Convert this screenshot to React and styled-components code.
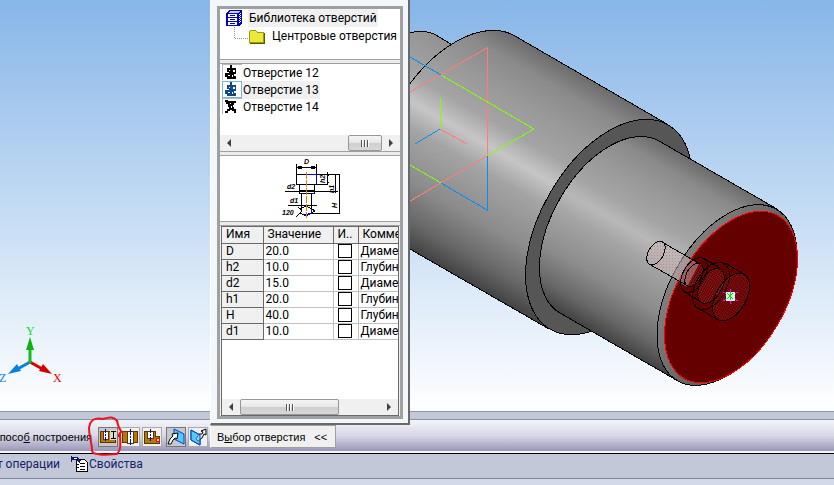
import React from 'react';
import styled, { createGlobalStyle } from 'styled-components';

const uiFont = 'Roboto, "Noto Sans", sans-serif';
const dialogFont = '"Liberation Sans", Arial, sans-serif';

const GlobalStyle = createGlobalStyle`
  * {
    box-sizing: border-box;
  }
  body {
    margin: 0;
    overflow: hidden;
    font-family: ${uiFont};
    font-size: 12px;
    color: #000;
  }
  button {
    font: inherit;
    color: inherit;
    padding: 0;
  }
`;

const Workspace = styled.div`
  display: flex;
  flex-direction: column;
  height: 100vh;
  background: #d3d9e8;
`;

const Viewport = styled.main`
  flex: 1;
  min-height: 0;
  overflow: hidden;
  background: linear-gradient(#87b6e8, #ffffff);

  svg {
    display: block;
    width: 100%;
    height: 100%;
  }
`;

const PanelGrip = styled.div`
  height: 9px;
  border-top: 1px solid #8a93a8;
  border-bottom: 1px solid #8a93a8;
  background: #c3c8d8;
`;

const PropertyBar = styled.div`
  display: flex;
  align-items: center;
  height: 33px;
  padding-top: 2px;
  border-bottom: 2px solid #f4f4fa;
  background: linear-gradient(#f4f4fa, #d8d8e6 50%, #9a97b8);
  font-family: ${dialogFont};
  font-size: 11px;
`;

const BarLabel = styled.span`
  display: flex;
  justify-content: flex-end;
  width: ${(props) => props.$width};
  overflow: hidden;
  white-space: nowrap;
`;

const ModeGroup = styled.div`
  display: flex;
  gap: 2px;
  margin-left: ${(props) => props.$left};
`;

const ModeSlot = styled.div`
  position: relative;
`;

const ModeButton = styled.button`
  display: block;
  width: 20px;
  height: 20px;
  border: 1px solid ${(props) => (props.$pressed ? '#777' : '#aaa')};
  background: ${(props) => (props.$pressed ? '#c8c8cc' : '#f0f0f0')};

  svg {
    display: block;
  }
`;

const Marker = styled.svg`
  position: absolute;
  left: -12px;
  top: -13px;
  z-index: 1;
  pointer-events: none;
`;

const PickerSlot = styled.div`
  position: relative;
  margin-left: 2px;
`;

const PickerButton = styled.button`
  display: flex;
  align-items: center;
  gap: 9px;
  height: 23px;
  padding: 0 8px 0 6px;
  border: 1px solid #a0a0a0;
  border-left-color: #fff;
  background: #f0f0f0;
`;

const Popup = styled.section`
  position: absolute;
  bottom: 100%;
  left: 0;
  width: 200px;
  height: 426px;
  padding: 6px 5px 4px 6px;
  border: 1px solid #fff;
  border-right: 2px solid #696969;
  border-bottom: 2px solid #696969;
  background: #f2f7fc;
  font-family: ${uiFont};
  font-size: 12px;
`;

const PopupFrame = styled.div`
  display: flex;
  flex-direction: column;
  height: 100%;
  border: 3px solid #a0a0a0;
  background: #f0f0f0;
`;

const Pane = styled.div`
  display: flex;
  flex-direction: column;
  height: ${(props) => props.$height || 'auto'};
  flex: ${(props) => (props.$height ? 'none' : '1')};
  min-height: 0;
  background: #fff;
`;

const Splitter = styled.div`
  flex: none;
  height: 5px;
  border-top: 1px solid #a0a0a0;
  border-bottom: 1px solid #a0a0a0;
  background: #ececec;
`;

const TreeItem = styled.button`
  display: flex;
  align-items: center;
  gap: 6px;
  height: 18px;
  margin-left: ${(props) => props.$indent};
  border: 0;
  background: none;
  text-align: left;
  white-space: nowrap;
`;

const ItemText = styled.span`
  padding: 0 1px;
  line-height: 18px;
  background: ${(props) => (props.$selected ? '#f0f0f0' : 'none')};
`;

const HoleItem = styled(TreeItem)`
  gap: 0;
  height: 17px;
`;

const ScrollTrack = styled.div`
  display: flex;
  flex: none;
  height: 16px;
  margin-top: auto;
  background: #f0f0f0;
`;

const ScrollArrow = styled.button`
  width: 18px;
  border: 0;
  background: none;

  svg {
    display: block;
    margin: 0 auto;
  }
`;

const ScrollRun = styled.div`
  display: flex;
  flex: 1;
  justify-content: ${(props) => (props.$end ? 'flex-end' : 'flex-start')};
`;

const ScrollThumb = styled.div`
  display: flex;
  align-items: center;
  justify-content: center;
  gap: 1px;
  width: ${(props) => props.$width};
  border: 1px solid #979797;
  border-radius: 2px;
  background: linear-gradient(#f5f5f5, #e6e6e6 50%, #cfcfcf 50%, #d8d8d8);

  i {
    width: 2px;
    height: 7px;
    border-left: 1px solid #555;
    background: #fff;
  }
`;

const Preview = styled.div`
  display: flex;
  justify-content: center;
`;

const TablePane = styled(Pane)`
  border: 1px solid #696969;
  margin: 0 1px;
`;

const ParamTable = styled.table`
  width: 100%;
  table-layout: fixed;
  border-collapse: collapse;
  white-space: nowrap;

  tr {
    height: 16px;
  }
  th,
  td {
    height: 16px;
    padding: 0 0 0 2px;
    overflow: hidden;
    line-height: 15px;
    font-weight: normal;
    text-align: left;
    border-right: 1px solid #c0c0c0;
    border-bottom: 1px solid #c0c0c0;
  }
  th {
    background: #f0f0f0;
    padding-left: 4px;
    border-right-color: #696969;
    border-bottom-color: #696969;
  }
  th:last-child,
  td:last-child {
    border-right: 0;
  }
`;

const NameCol = styled.col`
  width: 41px;
`;

const ValueCol = styled.col`
  width: 70px;
`;

const FlagCol = styled.col`
  width: 25px;
`;

const Check = styled.input`
  appearance: none;
  display: block;
  width: 14px;
  height: 14px;
  margin: 0 0 0 2px;
  border: 1px solid #000;
  background: #fff;
`;

const TabBar = styled.nav`
  display: flex;
  align-items: center;
  height: 26px;
  padding-bottom: 4px;
  border-top: 1px solid #000;
  border-bottom: 1px solid #8088a0;
  background: #c3c8d8;
  color: #15226b;
`;

const Tab = styled.button`
  display: flex;
  align-items: center;
  gap: 1px;
  margin-left: 11px;
  border: 0;
  background: none;
`;

const BottomEdge = styled.div`
  height: 6px;
`;

const params = [
  ['D', '20.0', 'Диаметр'],
  ['h2', '10.0', 'Глубина'],
  ['d2', '15.0', 'Диаметр'],
  ['h1', '20.0', 'Глубина'],
  ['H', '40.0', 'Глубина'],
  ['d1', '10.0', 'Диаметр'],
];

// circle seen along the shaft axis
const Ring = ({ x, y, r, ...rest }) => (
  <ellipse rx={r} ry={r * 0.577} transform={`translate(${x} ${y}) rotate(-60)`} {...rest} />
);

const Shading = ({ id, peak, x1, y1, x2, y2 }) => (
  <linearGradient id={id} gradientUnits="userSpaceOnUse" x1={x1} y1={y1} x2={x2} y2={y2}>
    <stop offset="0" stopColor="#6c6c6c" />
    <stop offset=".1" stopColor="#8a8a8a" />
    <stop offset=".22" stopColor="#989898" />
    <stop offset=".36" stopColor="#a4a4a4" />
    <stop offset=".46" stopColor={peak} />
    <stop offset=".56" stopColor="#a4a4a4" />
    <stop offset=".75" stopColor="#8c8c8c" />
    <stop offset=".9" stopColor="#686868" />
    <stop offset="1" stopColor="#444" />
  </linearGradient>
);

const Scene = () => (
  <svg viewBox="0 0 834 411" preserveAspectRatio="xMinYMin slice" role="img" aria-label="Вал">
    <defs>
      <Shading id="body" peak="#c6c6c6" x1="667" y1="124" x2="549" y2="328" />
      <Shading id="neck" peak="#b8b8b8" x1="659" y1="141" x2="560" y2="312" />
      <linearGradient id="chamfer" x1="0" y1="0" x2="0" y2="1">
        <stop offset="0" stopColor="#808080" />
        <stop offset="1" stopColor="#505050" />
      </linearGradient>
      <pattern id="dots" width="3" height="3" patternUnits="userSpaceOnUse">
        <rect width="1" height="1" fill="#c87870" />
      </pattern>
      <pattern id="redDots" width="2" height="2" patternUnits="userSpaceOnUse">
        <rect width="1" height="1" fill="#a84848" />
      </pattern>
    </defs>

    <g stroke="#000" shapeRendering="crispEdges">
      <path d="M380 50 L410 33 Q421 29 434 34 L480 61 L400 160 Z" fill="url(#body)" />
      <path d="M515 36 L667 124 L549 329 L396 241 A118 68 -60 0 1 515 36 Z" fill="url(#body)" />
      <Ring x={609} y={227} r={118} fill="#565656" />
      <path d="M659 141 L777 209 L678 381 L560 313 A99 57 -60 0 1 659 141 Z" fill="url(#neck)" />
      <Ring x={727} y={295} r={99} fill="url(#chamfer)" />
      <Ring x={731} y={297} r={94} fill="#640000" stroke="#f00" />
    </g>

    <path d="M662 242 L699 264 L687 287 L649 264 A13 8 -60 0 1 662 242 Z" fill="#c4b8b8" opacity=".5" />
    <path d="M662 242 L699 264 L687 287 L649 264 A13 8 -60 0 1 662 242 Z" fill="url(#dots)" opacity=".7" />
    <g fill="none" stroke="#000" shapeRendering="crispEdges">
      <path d="M662 242 L700 264 M649 264 L688 286" />
      <Ring x={656} y={253} r={13} />
      <Ring x={694} y={275} r={13} fill="url(#redDots)" fillOpacity=".7" />
      <Ring x={694} y={275} r={19} />
      <path d="M703 258 L720 268 M683 291 L701 302" />
      <Ring x={711} y={286} r={19} fill="url(#redDots)" fillOpacity=".7" />
      <Ring x={711} y={286} r={26} />
      <path d="M725 263 L744 274 M698 308 L718 320" />
      <Ring x={731} y={297} r={26} fill="url(#redDots)" fillOpacity=".5" />
    </g>
    <g stroke="#f0f" shapeRendering="crispEdges">
      <path d="M730 289 V304 M723 292 L738 301 M723 301 L738 292" />
      <rect x="726" y="292" width="9" height="9" fill="#c8f8e0" stroke="none" />
      <path d="M727 293 L733 299 M733 293 L727 299 M730 292 V300" stroke="#28c828" />
    </g>

    <g fill="none" shapeRendering="crispEdges">
      <path d="M410 92 L487 48 V156 L410 201 M440 129 L467 144" stroke="#ff7c7c" />
      <path d="M410 57 L441 75 M487 156 V210 L441 183 M440 129 L415 144" stroke="#0090f8" />
      <path d="M441 75 L534 129 L487 156 M441 183 L410 165 M440 98 V129" stroke="#80ff00" />
    </g>

    <g fill="none" strokeWidth="3">
      <path d="M30 362 L46 371" stroke="#e00000" />
      <path d="M30 362 L14 371" stroke="#0880e0" />
      <path d="M30 363 V346" stroke="#10c010" />
    </g>
    <path d="M52 374 L39 371 L43 364 Z" fill="#d00000" />
    <path d="M8 374 L21 371 L17 364 Z" fill="#0880e0" />
    <path d="M30 337 L26 350 H34 Z" fill="#10b010" />
    <g fontFamily="Liberation Serif, serif" fontSize="12">
      <text x="26" y="335" fill="#00e020">Y</text>
      <text x="53" y="382" fill="#f00000">X</text>
      <text x="-1" y="382" fill="#0880e0">Z</text>
    </g>
  </svg>
);

const ScrollBar = ({ thumb, end }) => (
  <ScrollTrack>
    <ScrollArrow aria-label="Влево">
      <svg width="4" height="8" viewBox="0 0 4 8"><path d="M4 0 V8 L0 4 Z" fill="#404040" /></svg>
    </ScrollArrow>
    <ScrollRun $end={end}>
      <ScrollThumb $width={thumb}><i /><i /><i /></ScrollThumb>
    </ScrollRun>
    <ScrollArrow aria-label="Вправо">
      <svg width="4" height="8" viewBox="0 0 4 8"><path d="M0 0 V8 L4 4 Z" fill="#404040" /></svg>
    </ScrollArrow>
  </ScrollTrack>
);

const CabinetIcon = () => (
  <svg width="16" height="16" viewBox="0 0 16 16" shapeRendering="crispEdges">
    <path d="M0 3 L3 0 H16 V13 L13 16 H0 Z" fill="#0000c8" />
    <path d="M2 4 H11 V7 H2 Z M2 8 H11 V11 H2 Z M2 12 H11 V15 H2 Z" fill="#fff" />
    <path d="M4 1 H14 L12 3 H3 Z" fill="#c8d0ff" />
    <path d="M4 5 H9 V6 H4 Z M4 9 H9 V10 H4 Z M4 13 H9 V14 H4 Z" fill="#0000c8" />
    <path d="M13 4 V14 M14 3 V13" stroke="#fff" strokeDasharray="1 1" />
  </svg>
);

const FolderIcon = () => (
  <svg width="31" height="18" viewBox="0 0 31 18" shapeRendering="crispEdges">
    <path d="M0 0 V11 H14" fill="none" stroke="#909090" strokeDasharray="1 1" />
    <path d="M16 6 L18 4 H22 L24 6 H31 V17 H16 Z" fill="#585800" />
    <path d="M15 5 L17 3 H21 L23 5 H29 V15 H15 Z" fill="#ece838" stroke="#a09810" />
  </svg>
);

const HoleIcon = ({ selected, bolt }) => {
  const ink = selected ? '#104880' : '#000';
  return (
    <svg width="20" height="17" viewBox="0 0 20 17" shapeRendering="crispEdges">
      <path d="M0 16 V0 H20" fill="none" stroke={selected ? '#78b0e8' : '#b8b8b8'} strokeWidth="2" />
      {selected && <path d="M0 16 H19 V1" fill="none" stroke="#78b0e8" />}
      {bolt ? (
        <path
          d="M3 2 H6 V3 H14 V5 H12 V7 H11 V9 H12 V11 H14 V15 H12 V13 H10 V12 H8 V13 H6 V15 H3 V13 H5 V11 H7 V9 H6 V6 H4 V4 H3 Z M8 5 H9 V6 H8 Z M9 8 H10 V10 H9 Z"
          fill={ink}
          fillRule="evenodd"
        />
      ) : (
        <path
          d="M8 1 H10 V4 H14 V10 H12 V12 H14 V15 H5 V13 H3 V9 H7 V8 H5 V4 H8 Z M7 6 H8 V7 H7 Z M11 6 H13 V8 H11 Z M10 11 H11 V13 H10 Z M6 11 H8 V12 H6 Z"
          fill={ink}
          fillRule="evenodd"
        />
      )}
    </svg>
  );
};

const HolePreview = () => (
  <svg width="64" height="64" viewBox="0 0 64 64" shapeRendering="crispEdges" role="img" aria-label="Эскиз отверстия">
    <g fill="none" stroke="#000">
      <path d="M18 8 V28 H38 V8 M18 11 H38 M18 18 H62 M21 28 V37 H36 V28 M23 37 V54 M33 37 V54" />
      <path d="M7 35 H60 M10 49 H39 M49 16 V28 M57 18 V37 M61 18 V57 M38 28 H50 M30 57 H62" />
      <path d="M22 53 L28 50 L34 53 L37 55 L31 58 L28 60 L22 57 L18 61 M20 51 L24 55 L22 57" />
      <path d="M20 10 H24 M33 10 H37 M20 12 H24 M33 12 H37 M49 19 H51 M49 26 H51" />
    </g>
    <path d="M22 35 H36" stroke="#000" strokeWidth="2" />
    <path d="M29 18 H38 V28 M34 37 H37 M26 58 L29 60 L33 57 V53" fill="none" stroke="#00f" />
    <path d="M28 16 V62" stroke="#f08000" strokeDasharray="7 1" />
    <g fontFamily="Liberation Sans, sans-serif" fontSize="7" fontStyle="italic" fontWeight="bold">
      <text x="26" y="8">D</text>
      <text x="9" y="33">d2</text>
      <text x="12" y="47">d1</text>
      <text x="4" y="59">120</text>
      <text transform="translate(47 27) rotate(-90)">h2</text>
      <text transform="translate(56 37) rotate(-90)">h1</text>
      <text transform="translate(59 52) rotate(-90)">H</text>
    </g>
  </svg>
);

const SectionIcon = ({ kind }) => (
  <svg width="18" height="18" viewBox="0 0 18 18" shapeRendering="crispEdges">
    {kind === 'depth' && (
      <>
        <path d="M1 3 H17 V15 H1 Z" fill="#583800" />
        <path d="M2 4 H16 V14 H2 Z" fill="#b87808" />
        <path d="M4 3 H9 V11 H4 Z" fill="#fff" stroke="#583800" />
        <path d="M11 2 H18 V12 H11 Z" fill="#d8d8d8" />
        <path d="M12 3 H17 V4 H15 V10 H17 V11 H12 V10 H14 V4 H12 Z" fill="#000" />
        <path d="M6 1 H7 V5 H6 Z M6 6 H7 V8 H6 Z M6 9 H7 V13 H6 Z" fill="#0000e0" />
      </>
    )}
    {kind === 'through' && (
      <>
        <path d="M1 3 H17 V15 H1 Z" fill="#583800" />
        <path d="M2 4 H16 V14 H2 Z" fill="#b87808" />
        <path d="M6 3 H12 V15 H6 Z" fill="#fff" stroke="#583800" />
        <path d="M9 1 H10 V7 H9 Z M9 8 H10 V10 H9 Z M9 11 H10 V17 H9 Z" fill="#0000e0" />
      </>
    )}
    {kind === 'point' && (
      <>
        <path d="M1 3 H12 V8 H16 V15 H1 Z" fill="#b87808" stroke="#583800" />
        <path d="M4 3 H10 V10 H4 Z" fill="#fff" stroke="#583800" />
        <path d="M7 1 H8 V5 H7 Z M7 6 H8 V8 H7 Z M7 9 H8 V13 H7 Z" fill="#0000e0" />
        <circle cx="15" cy="12" r="2" fill="#fff" stroke="#f00" />
      </>
    )}
  </svg>
);

const PlaneIcon = ({ flip }) => (
  <svg width="18" height="18" viewBox="0 0 18 18">
    <path d={flip ? 'M2 2 L11 7 V17 L2 12 Z' : 'M7 1 L17 6 V16 L7 11 Z'} fill="#58c8f8" stroke="#0040c0" />
    <path
      d={flip ? 'M7 11 L10 6 L13 6 L14 4 L12 3 L17 1 L17 7 L15 6 L13 10 L9 13 Z' : 'M1 16 L3 11 L6 8 L5 6 L11 5 L10 11 L8 10 L6 12 L4 16 Z'}
      fill={flip ? '#e8f4ff' : '#fff'}
      stroke="#000"
    />
    {flip && <path d="M11 7 V17 L2 12 V2 Z" fill="#58c8f8" fillOpacity=".6" stroke="#0040c0" />}
  </svg>
);

const PropertiesIcon = () => (
  <svg width="17" height="16" viewBox="0 0 17 16" shapeRendering="crispEdges">
    <path d="M6 3 H13 L16 6 V15 H5 V4 Z" fill="#fff" stroke="#000" />
    <path d="M9 7 H14 V8 H9 Z M9 10 H14 V11 H9 Z M9 13 H14 V14 H9 Z M6 8 H8 V9 H6 Z M6 11 H8 V12 H6 Z" fill="#000" />
    <path d="M0 0 H1 V6 H0 Z M1 1 H6 L10 4 L9 7 L5 4 H1 Z" fill="#101860" />
    <path d="M3 2 H6 V3 H3 Z" fill="#fff" />
  </svg>
);

const HoleLibrary = () => (
  <Popup aria-label="Выбор отверстия">
    <PopupFrame>
      <Pane $height="50px">
        <TreeItem $indent="6px">
          <CabinetIcon />
          <ItemText $selected>Библиотека отверстий</ItemText>
        </TreeItem>
        <TreeItem $indent="14px">
          <FolderIcon />
          <ItemText>Центровые отверстия</ItemText>
        </TreeItem>
      </Pane>
      <Splitter />
      <Pane $height="87px">
        <HoleItem $indent="2px">
          <HoleIcon />
          <ItemText>Отверстие 12</ItemText>
        </HoleItem>
        <HoleItem $indent="2px">
          <HoleIcon selected />
          <ItemText $selected>Отверстие 13</ItemText>
        </HoleItem>
        <HoleItem $indent="2px">
          <HoleIcon bolt />
          <ItemText>Отверстие 14</ItemText>
        </HoleItem>
        <ScrollBar thumb="34px" end />
      </Pane>
      <Splitter />
      <Pane $height="65px">
        <Preview>
          <HolePreview />
        </Preview>
      </Pane>
      <Splitter />
      <TablePane>
        <ParamTable>
          <colgroup>
            <NameCol />
            <ValueCol />
            <FlagCol />
            <col />
          </colgroup>
          <thead>
            <tr>
              <th>Имя</th>
              <th>Значение</th>
              <th>И..</th>
              <th>Комментарий</th>
            </tr>
          </thead>
          <tbody>
            {params.map(([name, value, comment]) => (
              <tr key={name}>
                <th scope="row">{name}</th>
                <td>{value}</td>
                <td><Check type="checkbox" aria-label={name} /></td>
                <td>{comment}</td>
              </tr>
            ))}
          </tbody>
        </ParamTable>
        <ScrollBar thumb="99px" />
      </TablePane>
    </PopupFrame>
  </Popup>
);

const App = () => (
  <Workspace>
    <GlobalStyle />
    <Viewport>
      <Scene />
    </Viewport>
    <PanelGrip />
    <PropertyBar>
      <BarLabel $width="92px"><span>Спосо<u>б</u> построения</span></BarLabel>
      <ModeGroup $left="6px">
        <ModeSlot>
          <ModeButton $pressed aria-label="На глубину"><SectionIcon kind="depth" /></ModeButton>
          <Marker width="42" height="46" viewBox="0 0 42 46">
            <path
              d="M32 8 C28 2 23 3 17 5 C9 3 4 6 3 14 C3 23 6 29 6 36 C6 39 8 40 12 40 C20 42 27 40 31 40 C36 35 34 27 34 19 C35 18 32 21 33 23 M31 7 C32 12 33 16 37 19"
              fill="none"
              stroke="#f01020"
              strokeWidth="2"
            />
          </Marker>
        </ModeSlot>
        <ModeButton aria-label="Через всё"><SectionIcon kind="through" /></ModeButton>
        <ModeButton aria-label="До вершины"><SectionIcon kind="point" /></ModeButton>
      </ModeGroup>
      <ModeGroup $left="4px">
        <ModeButton $pressed aria-label="Прямое направление"><PlaneIcon /></ModeButton>
        <ModeButton aria-label="Обратное направление"><PlaneIcon flip /></ModeButton>
      </ModeGroup>
      <PickerSlot>
        <PickerButton>
          <span>В<u>ы</u>бор отверстия</span>
          <span>&lt;&lt;</span>
        </PickerButton>
        <HoleLibrary />
      </PickerSlot>
    </PropertyBar>
    <TabBar>
      <BarLabel $width="60px">т операции</BarLabel>
      <Tab><PropertiesIcon />Свойства</Tab>
    </TabBar>
    <BottomEdge />
  </Workspace>
);

export default App;
